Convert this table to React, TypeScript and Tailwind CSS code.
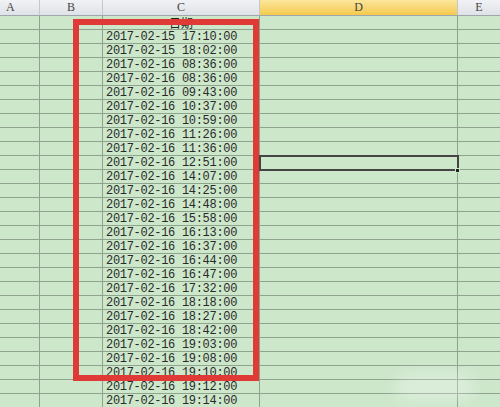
import React from "react";

const times = [
  "2017-02-15 17:10:00",
  "2017-02-15 18:02:00",
  "2017-02-16 08:36:00",
  "2017-02-16 08:36:00",
  "2017-02-16 09:43:00",
  "2017-02-16 10:37:00",
  "2017-02-16 10:59:00",
  "2017-02-16 11:26:00",
  "2017-02-16 11:36:00",
  "2017-02-16 12:51:00",
  "2017-02-16 14:07:00",
  "2017-02-16 14:25:00",
  "2017-02-16 14:48:00",
  "2017-02-16 15:58:00",
  "2017-02-16 16:13:00",
  "2017-02-16 16:37:00",
  "2017-02-16 16:44:00",
  "2017-02-16 16:47:00",
  "2017-02-16 17:32:00",
  "2017-02-16 18:18:00",
  "2017-02-16 18:27:00",
  "2017-02-16 18:42:00",
  "2017-02-16 19:03:00",
  "2017-02-16 19:08:00",
  "2017-02-16 19:10:00",
  "2017-02-16 19:12:00",
  "2017-02-16 19:14:00",
];

function Row({ c, first }: { c: string; first?: boolean }) {
  return (
    <div className="flex h-[14px] border-b border-[#8ea28e]">
      <div className="w-[40px] border-r border-[#8ea28e]" />
      <div className="w-[63px] border-r border-[#8ea28e]" />
      <div
        className={
          first
            ? "w-[157px] border-r border-[#8ea28e] text-center text-[12px] leading-[13px] text-[#222]"
            : "w-[157px] border-r border-[#8ea28e] pl-[3px] text-[12px] tracking-[-0.3px] leading-[14px] text-[#2a2a2a] whitespace-nowrap overflow-hidden"
        }
        style={{
          fontFamily: first
            ? "'Noto Sans CJK SC', sans-serif"
            : "'Liberation Mono', monospace",
        }}
      >
        {c}
      </div>
      <div className="w-[198px] border-r border-[#8ea28e]" />
      <div className="w-[42px]" />
    </div>
  );
}

export default function App() {
  return (
    <div className="relative w-[500px] h-[407px] overflow-hidden bg-[#cde7cb]">
      {/* header */}
      <div
        className="flex h-[16px] border-b border-[#9fa7ae] text-[12px] leading-[15px] text-[#444]"
        style={{ fontFamily: "'Liberation Serif', serif" }}
      >
        <div className="w-[40px] pl-[6px] border-r border-[#c3c8ce] bg-gradient-to-b from-[#f1f2f5] to-[#dfe2e7]">
          A
        </div>
        <div className="w-[63px] text-center border-r border-[#c3c8ce] bg-gradient-to-b from-[#f1f2f5] to-[#dfe2e7]">
          B
        </div>
        <div className="w-[157px] text-center border-r border-[#c3c8ce] bg-gradient-to-b from-[#f1f2f5] to-[#dfe2e7]">
          C
        </div>
        <div className="w-[198px] text-center border-r border-[#c3c8ce] bg-gradient-to-b from-[#fbe69a] to-[#f4c94a]">
          D
        </div>
        <div className="w-[42px] text-center bg-gradient-to-b from-[#f1f2f5] to-[#dfe2e7]">
          E
        </div>
      </div>
      <Row c="日期" first />
      {times.map((t, i) => (
        <Row key={i} c={t} />
      ))}

      {/* red annotation box */}
      <div className="absolute left-[73px] top-[19px] w-[186px] h-[362px] border-[6px] border-[#e03a36] pointer-events-none" />

      {/* selected cell */}
      <div className="absolute left-[259px] top-[155px] w-[200px] h-[16px] border-2 border-[#444]" />
      <div className="absolute left-[455px] top-[168px] w-[5px] h-[5px] bg-[#222] border border-[#cde7cb]" />

      {/* faint watermark */}
      <div className="absolute left-[395px] top-[374px] w-[80px] h-[26px] rounded-full bg-white/30 blur-[8px]" />
    </div>
  );
}
